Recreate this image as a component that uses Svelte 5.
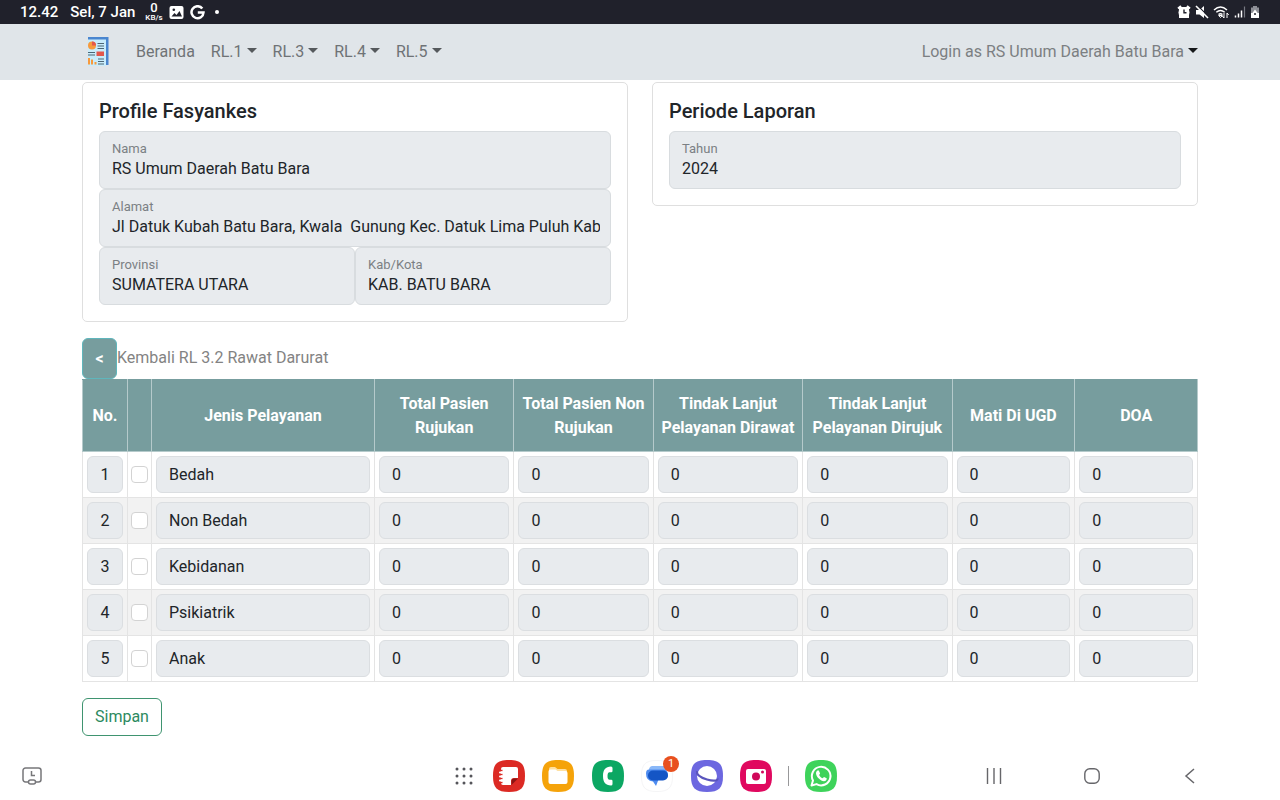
<script lang="ts">
    interface Row {
        id: number;
        name: string;
        checked: boolean;
        values: string[];
    }

    const menus = ['RL.1', 'RL.3', 'RL.4', 'RL.5'];

    const columns = [
        'Total Pasien Rujukan',
        'Total Pasien Non Rujukan',
        'Tindak Lanjut Pelayanan Dirawat',
        'Tindak Lanjut Pelayanan Dirujuk',
        'Mati Di UGD',
        'DOA',
    ];

    const services = ['Bedah', 'Non Bedah', 'Kebidanan', 'Psikiatrik', 'Anak'];

    let rows: Row[] = $state(
        services.map((name, i) => ({
            id: i + 1,
            name,
            checked: false,
            values: columns.map(() => '0'),
        }))
    );

    function handleSubmit(e: SubmitEvent) {
        e.preventDefault();
    }
</script>

{#snippet field(id: string, label: string, value: string)}
    <div class="field">
        <label for={id}>{label}</label>
        <input {id} type="text" {value} readonly>
    </div>
{/snippet}

<div class="screen">
    <div class="status">
        <div class="status-left">
            <span>12.42</span>
            <span>Sel, 7 Jan</span>
            <span class="speed"><b>0</b><small>KB/s</small></span>
            <svg width="15" height="15" viewBox="0 0 15 15">
                <rect x="0.5" y="1" width="14" height="13" rx="2" fill="#fff" />
                <path d="M2.500 11.500 5.500 8l2 2 3-4 2.500 5.500z" fill="#20212b" />
                <circle cx="4.800" cy="4.800" r="1.300" fill="#20212b" />
            </svg>
            <svg width="15" height="15" viewBox="0 0 15 15">
                <path d="M12.300 3.600A6 6 0 1 0 13.500 7.500H7.800" fill="none" stroke="#fff" stroke-width="2.500" />
            </svg>
            <span class="dot"></span>
        </div>
        <div class="status-right">
            <svg width="14" height="14" viewBox="0 0 14 14">
                <path d="M1 3.500 4 1M13 3.500 10 1" stroke="#fff" stroke-width="2" />
                <path d="M2 2h10v11H2z" fill="#fff" />
                <circle cx="7" cy="7.500" r="5.500" fill="#fff" />
                <path d="M7 4.500v3.300h2.500" fill="none" stroke="#20212b" stroke-width="1.400" />
            </svg>
            <svg width="14" height="14" viewBox="0 0 14 14">
                <path d="M1 5h3.500l4.500-4v12L4.500 9.500H1z" fill="#fff" />
                <path d="M2 0l12 12" stroke="#20212b" stroke-width="1.200" />
                <path d="M1 1l12 12" stroke="#fff" stroke-width="1.600" />
            </svg>
            <svg width="17" height="14" viewBox="0 0 17 14">
                <path d="M1 5Q7.500-1 14 5M3.300 7.300Q7.500 3.500 11.700 7.300M5.500 9.500Q7.500 7.800 9.500 9.500" fill="none" stroke="#fff" stroke-width="1.400" />
                <path d="M7.500 12.500 5.700 10.500h3.600zM11 8v5l-1.700-2M14 13V8l1.700 2" fill="none" stroke="#fff" />
            </svg>
            <svg width="12" height="14" viewBox="0 0 12 14">
                <path d="M1.500 12.500v-2M4.500 12.500v-4M7.500 12.500v-7" stroke="#fff" stroke-width="1.500" />
                <path d="M10.500 12.500v-11" stroke="#777982" stroke-width="1.200" />
            </svg>
            <svg width="10" height="14" viewBox="0 0 10 14">
                <path d="M3 1h4v1.500h2V13H1V2.500h2z" fill="#8e9097" />
                <path d="M1 8h8v5H1z" fill="#fff" />
                <path d="M5 4.500 8 8.500 7 11H3L2 8.500z" fill="#fff" />
                <circle cx="5" cy="9" r="1" fill="#20212b" />
            </svg>
        </div>
    </div>

    <nav class="navbar">
        <div class="container nav-inner">
            <a class="brand" href="#beranda" aria-label="Beranda">
                <svg width="30" height="30" viewBox="0 0 30 30">
                    <path d="M6 0h20.500v28H24V3H6z" fill="#4a86cf" />
                    <path d="M6 2.500h18V29H6z" fill="#c9ecfb" />
                    <circle cx="10" cy="8.500" r="4" fill="#f79a3c" />
                    <path d="M10 8.500v-4a4 4 0 0 1 4 4z" fill="#e2574c" />
                    <path d="M15.500 6.500H22M15.500 9H22M15.500 11.500H22M6 15.500h7M6 18h7M16 22h6M16 24.500h6M16 27h6" stroke="#4d6675" stroke-width="1.200" />
                    <path d="M14.500 14.500H22V19h-7.500z" fill="#e2574c" />
                    <path d="M6 21h2v6.500H6zM9 22.500h2v5H9zM12.500 25h2v2.500h-2z" fill="#f79a3c" />
                </svg>
            </a>
            <a class="nav-link" href="#beranda">Beranda</a>
            {#each menus as menu}
                <button class="nav-link caret" type="button">{menu}</button>
            {/each}
            <button class="nav-link caret login" type="button">Login as RS Umum Daerah Batu Bara</button>
        </div>
    </nav>

    <main class="container">
        <div class="cards">
            <section class="card">
                <h5>Profile Fasyankes</h5>
                {@render field('nama', 'Nama', 'RS Umum Daerah Batu Bara')}
                {@render field('alamat', 'Alamat', 'Jl Datuk Kubah Batu Bara, Kwala  Gunung Kec. Datuk Lima Puluh Kab')}
                <div class="pair">
                    {@render field('provinsi', 'Provinsi', 'SUMATERA UTARA')}
                    {@render field('kabkota', 'Kab/Kota', 'KAB. BATU BARA')}
                </div>
            </section>
            <section class="card">
                <h5>Periode Laporan</h5>
                {@render field('tahun', 'Tahun', '2024')}
            </section>
        </div>

        <form onsubmit={handleSubmit}>
            <div class="back">
                <button type="button" aria-label="Kembali">&lt;</button>
                <span>Kembali RL 3.2 Rawat Darurat</span>
            </div>

            <table>
                <colgroup>
                    <col class="c-no">
                    <col class="c-check">
                    <col class="c-name">
                    <col class="c-total">
                    <col class="c-total">
                    <col class="c-lanjut">
                    <col class="c-lanjut">
                    <col class="c-small">
                    <col class="c-small">
                </colgroup>
                <thead>
                    <tr>
                        <th>No.</th>
                        <th></th>
                        <th>Jenis Pelayanan</th>
                        {#each columns as column}
                            <th>{column}</th>
                        {/each}
                    </tr>
                </thead>
                <tbody>
                    {#each rows as row (row.id)}
                        <tr>
                            <td><input class="control no" type="text" value={row.id} aria-label="No." readonly></td>
                            <td class="check"><input type="checkbox" bind:checked={row.checked} aria-label={row.name}></td>
                            <td><input class="control" type="text" value={row.name} aria-label="Jenis Pelayanan" readonly></td>
                            {#each columns as column, i}
                                <td><input class="control" type="text" bind:value={row.values[i]} aria-label={column} readonly={!row.checked}></td>
                            {/each}
                        </tr>
                    {/each}
                </tbody>
            </table>

            <button class="save" type="submit">Simpan</button>
        </form>
    </main>

    <footer class="taskbar">
        <button type="button" aria-label="Recent">
            <svg width="20" height="20" viewBox="0 0 20 20" fill="none" stroke="#77777a" stroke-width="1.500">
                <path d="M6 16H3.500a2.500 2.500 0 0 1-2.500-2.500V4.500A2.500 2.500 0 0 1 3.500 2h13A2.500 2.500 0 0 1 19 4.500v9a2.500 2.500 0 0 1-2.500 2.500H14" />
                <rect x="6.500" y="14" width="7" height="4" rx="2" />
                <path d="M9.500 5v4.500H13" />
            </svg>
        </button>
        <div class="dock">
            <button class="all-apps" type="button" aria-label="Apps">
                <svg width="18" height="18" viewBox="0 0 18 18" fill="#55555a">
                    {#each [2, 9, 16] as y}
                        {#each [2, 9, 16] as x}
                            <circle cx={x} cy={y} r="1.500" />
                        {/each}
                    {/each}
                </svg>
            </button>
            <div class="apps">
                <button type="button" aria-label="Notes">
                    <svg width="32" height="32" viewBox="0 0 32 32">
                        <path d="M16 0C28 0 32 4 32 16S28 32 16 32 0 28 0 16 4 0 16 0z" fill="#dc2a24" />
                        <path d="M10 7h13a2 2 0 0 1 2 2v9h-4a3 3 0 0 0-3 3v4h-8a2 2 0 0 1-2-2V9a2 2 0 0 1 2-2z" fill="#fff" />
                        <path d="M18.500 25v-4a2.500 2.500 0 0 1 2.500-2.500h4z" fill="#8c1413" />
                        <path d="M8 10.500h1.500M8 14.500h1.500M8 18.500h1.500M8 22.500h1.500" stroke="#dc2a24" stroke-width="1.500" />
                        <path d="M7 12.500h2M7 16.500h2M7 20.500h2" stroke="#fff" stroke-width="2" stroke-linecap="round" />
                    </svg>
                </button>
                <button type="button" aria-label="Files">
                    <svg width="32" height="32" viewBox="0 0 32 32">
                        <path d="M16 0C28 0 32 4 32 16S28 32 16 32 0 28 0 16 4 0 16 0z" fill="#f5a30a" />
                        <path d="M7 9a2 2 0 0 1 2-2h4l2.500 2H23a2 2 0 0 1 2 2v2H7z" fill="#ffe0a0" />
                        <path d="M8.500 9.500h5l2 1.500h8a2 2 0 0 1 2 2v9a2 2 0 0 1-2 2h-15a2 2 0 0 1-2-2V11.500a2 2 0 0 1 2-2z" fill="#fff" />
                    </svg>
                </button>
                <button type="button" aria-label="Phone">
                    <svg width="32" height="32" viewBox="0 0 32 32">
                        <path d="M16 0C28 0 32 4 32 16S28 32 16 32 0 28 0 16 4 0 16 0z" fill="#0ca763" />
                        <path d="M19 6.500q1.500 0 1.500 1.500v3q0 1.200-1.200 1.200h-1.800q-2 0-2 3.800t2 3.800h1.800q1.200 0 1.200 1.200v3q0 1.500-1.500 1.500c-5.500 0-8-3.500-8-9.500s2.500-9.500 8-9.500z" fill="#fff" />
                    </svg>
                </button>
                <button class="messages" type="button" aria-label="Messages">
                    <svg width="32" height="32" viewBox="0 0 32 32">
                        <path d="M16 .5C27.700.5 31.500 4.300 31.500 16S27.700 31.500 16 31.500.5 27.700.5 16 4.300.5 16 .5z" fill="#fff" stroke="#f5f5f6" />
                        <path d="M11 6h11a4 4 0 0 1 4 4v7H8V10a4 4 0 0 1 3-4z" fill="#8ab8f8" />
                        <path d="M8 9.500h14a5 5 0 0 1 5 5 5 5 0 0 1-5 5h-4.500L15 26l-3-4.500Q5 21 5 13.500q0-4 3-4z" fill="#4e8cf0" />
                        <rect x="7" y="10.500" width="20" height="10" rx="5" fill="#1455c5" />
                    </svg>
                    <span class="badge">1</span>
                </button>
                <button type="button" aria-label="Internet">
                    <svg width="32" height="32" viewBox="0 0 32 32">
                        <path d="M16 0C28 0 32 4 32 16S28 32 16 32 0 28 0 16 4 0 16 0z" fill="#6c67e0" />
                        <circle cx="16" cy="16" r="10" fill="#fff" />
                        <path d="M6 11c-1 4 5 7 10 8.500s11 2 10.500-1" fill="none" stroke="#5a55bd" stroke-width="2.200" />
                    </svg>
                </button>
                <button type="button" aria-label="Camera">
                    <svg width="32" height="32" viewBox="0 0 32 32">
                        <path d="M16 0C28 0 32 4 32 16S28 32 16 32 0 28 0 16 4 0 16 0z" fill="#e0095f" />
                        <rect x="6" y="9" width="20" height="15" rx="2" fill="#fff" />
                        <circle cx="16" cy="16.500" r="4" fill="#d0085a" />
                        <circle cx="22.500" cy="12" r="1.500" fill="#d0085a" />
                    </svg>
                </button>
            </div>
            <span class="separator"></span>
            <button type="button" aria-label="WhatsApp">
                <svg width="32" height="32" viewBox="0 0 32 32">
                    <path d="M16 0C28 0 32 4 32 16S28 32 16 32 0 28 0 16 4 0 16 0z" fill="#3ed35b" />
                    <path d="M6.500 25.500 8 20.500a9.300 9.300 0 1 1 3.500 3.600z" fill="none" stroke="#fff" stroke-width="2" stroke-linejoin="round" />
                    <path d="M12.500 10.500h1.300l1.300 3-1 1.500c.8 1.600 1.800 2.500 3.500 3.300l1.400-1.400 2.700 1.300c.2 2-1.200 3-2.700 3-3.500-.2-7.700-4.200-8-7.700 0-1.200.6-2.400 1.500-3z" fill="#fff" />
                </svg>
            </button>
        </div>
        <div class="system">
            <button type="button" aria-label="Recents">
                <svg width="16" height="16" viewBox="0 0 16 16" stroke="#66666a" stroke-width="1.400">
                    <path d="M1.500 0v16M8 0v16M14.500 0v16" />
                </svg>
            </button>
            <button type="button" aria-label="Home">
                <svg width="16" height="16" viewBox="0 0 16 16">
                    <rect x="0.800" y="0.800" width="14.400" height="14.400" rx="5" fill="none" stroke="#66666a" stroke-width="1.400" />
                </svg>
            </button>
            <button type="button" aria-label="Back">
                <svg width="16" height="16" viewBox="0 0 16 16">
                    <path d="M12 1 4 8l8 7" fill="none" stroke="#66666a" stroke-width="1.500" />
                </svg>
            </button>
        </div>
    </footer>
</div>

<style>
    :global(body) {
        margin: 0;
        background: #fff;
    }
    .screen, .screen * {
        box-sizing: border-box;
    }
    .screen {
        display: flex;
        flex-direction: column;
        min-height: 100vh;
        font-family: Roboto, "Liberation Sans", sans-serif;
        font-size: 16px;
        line-height: 24px;
        color: #212529;
    }
    button, input {
        font: inherit;
        color: inherit;
        margin: 0;
    }
    button {
        padding: 0;
        border: none;
        background: none;
        cursor: pointer;
    }
    svg {
        display: block;
    }

    /* device status bar */
    .status {
        display: flex;
        justify-content: space-between;
        align-items: center;
        height: 24px;
        padding: 0 20px;
        background: #20212b;
        color: #fff;
        font-size: 15px;
        font-weight: 500;
    }
    .status-left {
        display: flex;
        align-items: center;
        gap: 6px;
    }
    .status-left span:first-child {
        margin-right: 6px;
    }
    .speed {
        display: flex;
        flex-direction: column;
        align-items: center;
        margin-left: 4px;
    }
    .speed b {
        font-size: 13px;
        line-height: 12px;
        font-weight: 500;
    }
    .speed small {
        font-size: 8px;
        line-height: 8px;
    }
    .dot {
        width: 4px;
        height: 4px;
        margin-left: 4px;
        border-radius: 50%;
        background: #fff;
    }
    .status-right {
        display: flex;
        align-items: center;
        gap: 4px;
    }

    .container {
        width: 100%;
        max-width: 1140px;
        margin: 0 auto;
        padding: 0 12px;
    }
    .navbar {
        background: #e0e5e9;
    }
    .nav-inner {
        display: flex;
        align-items: center;
        height: 56px;
    }
    .brand {
        margin-right: 16px;
    }
    .nav-link {
        padding: 8px;
        color: #6f7376;
        text-decoration: none;
        white-space: nowrap;
    }
    .caret::after {
        content: "";
        display: inline-block;
        margin-left: 4px;
        vertical-align: 4px;
        border-top: 5px solid #55595c;
        border-left: 5px solid transparent;
        border-right: 5px solid transparent;
    }
    .login {
        margin-left: auto;
        padding-right: 0;
        color: #7c7f82;
    }
    .login::after {
        border-top-color: #16181a;
    }

    .cards {
        display: grid;
        grid-template-columns: 1fr 1fr;
        align-items: start;
        gap: 24px;
        padding: 2px 0 16px;
    }
    .card {
        padding: 16px;
        border: 1px solid #dfdfdf;
        border-radius: 5px;
    }
    h5 {
        margin: 0 0 8px;
        font-size: 20px;
        line-height: 24px;
        font-weight: 500;
    }
    .pair {
        display: grid;
        grid-template-columns: 1fr 1fr;
    }
    .field {
        display: flex;
        flex-direction: column;
        height: 58px;
        padding: 9px 10px 0 12px;
        border: 1px solid #d8dcdf;
        border-radius: 6px;
        background: #e8ebee;
    }
    .field label {
        font-size: 13px;
        line-height: 16px;
        color: #7b8084;
    }
    .field input {
        width: 100%;
        height: 24px;
        padding: 0;
        border: none;
        background: none;
        outline: none;
    }

    .back {
        display: flex;
        align-items: center;
        color: #838383;
    }
    .back button {
        width: 35px;
        height: 41px;
        border: 1px solid #5fb6bc;
        border-radius: 6px;
        background: #779d9e;
        color: #fff;
        font-weight: 700;
    }
    .back span {
        margin-bottom: 2px;
    }

    table {
        width: 100%;
        table-layout: fixed;
        border-collapse: collapse;
    }
    .c-no {
        width: 45px;
    }
    .c-check {
        width: 24px;
    }
    .c-name {
        width: 20%;
    }
    .c-total {
        width: 12.5%;
    }
    .c-lanjut {
        width: 13.4%;
    }
    th {
        height: 72px;
        padding: 0 4px;
        border: 1px solid #b5cacb;
        border-top-color: #779d9e;
        background: #779d9e;
        color: #fff;
        font-weight: 700;
        text-align: center;
    }
    td {
        padding: 4px;
        border: 1px solid #e4e4e4;
    }
    tbody tr:nth-child(even) {
        background: #f2f2f2;
    }
    .control {
        display: block;
        width: 100%;
        height: 37px;
        padding: 0 12px;
        border: 1px solid #dbdee1;
        border-radius: 6px;
        background: #e8ebee;
    }
    .no {
        padding: 0;
        text-align: center;
    }
    .check {
        padding: 0 3px;
    }
    .check input {
        appearance: none;
        display: block;
        width: 17px;
        height: 17px;
        border: 1px solid #d3d3d3;
        border-radius: 4px;
        background: #fff;
    }
    .check input:checked {
        border-color: #779d9e;
        background: #779d9e;
    }
    .save {
        height: 38px;
        margin: 16px 0;
        padding: 0 12px;
        border: 1px solid #3f9470;
        border-radius: 6px;
        color: #2c8a60;
    }

    /* device task bar */
    .taskbar {
        display: grid;
        grid-template-columns: 1fr auto 1fr;
        align-items: center;
        height: 48px;
        margin-top: auto;
        padding: 0 10px 0 22px;
    }
    .taskbar > button {
        justify-self: start;
    }
    .dock {
        display: flex;
        align-items: center;
        gap: 16px;
    }
    .all-apps {
        margin-right: 4px;
    }
    .apps {
        display: flex;
        justify-content: space-between;
        width: 279px;
    }
    .messages {
        position: relative;
    }
    .badge {
        position: absolute;
        top: -4px;
        right: -6px;
        width: 16px;
        height: 16px;
        border-radius: 50%;
        background: #e8501e;
        color: #fff;
        font-size: 11px;
        line-height: 16px;
        text-align: center;
    }
    .separator {
        width: 1px;
        height: 20px;
        background: #98989a;
    }
    .system {
        display: flex;
        justify-content: flex-end;
        gap: 82px;
        padding-right: 72px;
    }
</style>
